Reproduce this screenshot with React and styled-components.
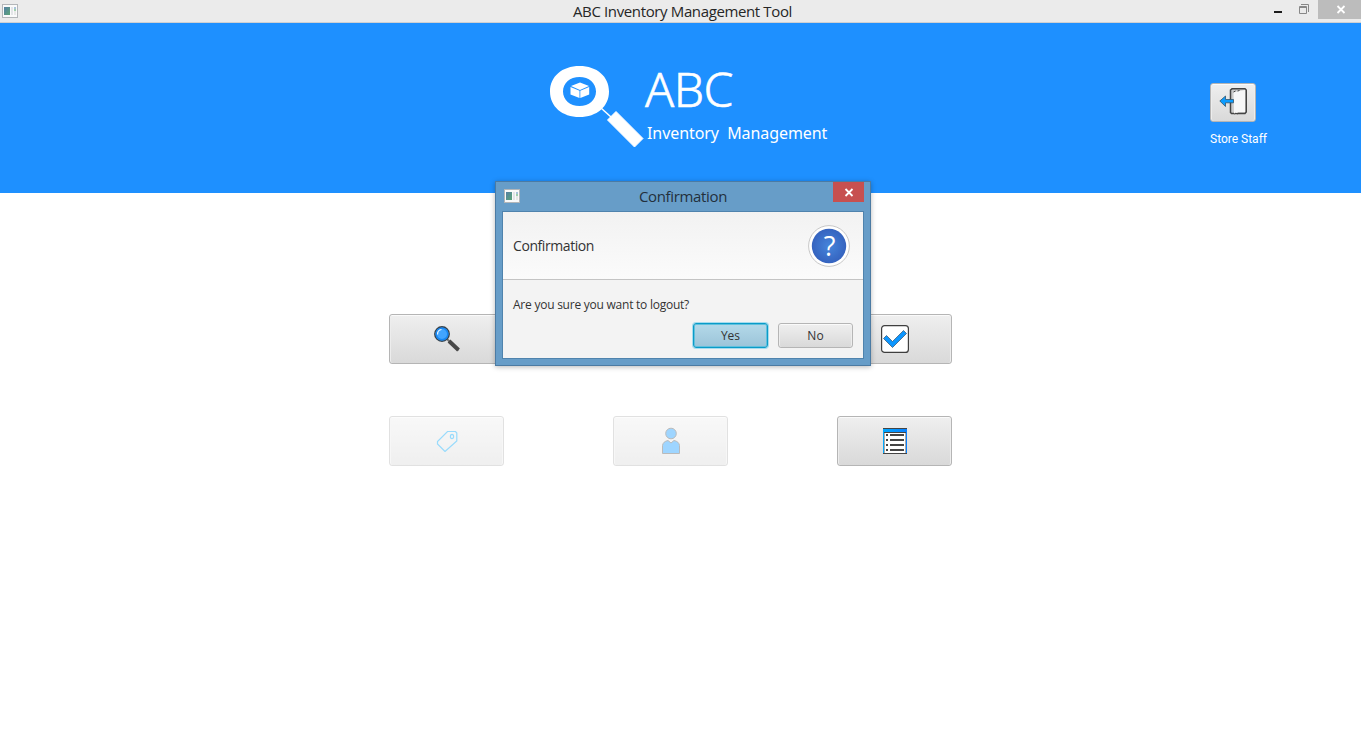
import React from "react";
import styled, { createGlobalStyle } from "styled-components";

const GlobalStyle = createGlobalStyle`
  * { box-sizing: border-box; }
  body {
    margin: 0;
    background: #fff;
    overflow: hidden;
    font-family: "Open Sans", "Noto Sans", sans-serif;
  }
  svg { display: block; }
`;

const Window = styled.div`
  position: relative;
  width: 1361px;
  height: 754px;
  background: #fff;
`;

const TitleBar = styled.div`
  display: grid;
  grid-template-columns: 120px 1fr 120px;
  height: 23px;
  background: #ebebeb;
  border-bottom: 1px solid #cfd0d2;
`;

const TitleIcon = styled.div`
  padding: 4px 0 0 2px;
`;

const WindowTitle = styled.div`
  padding-left: 4px;
  text-align: center;
  font-size: 15px;
  line-height: 23px;
  letter-spacing: -0.37px;
  color: #262626;
  white-space: nowrap;
`;

const Controls = styled.div`
  display: flex;
  justify-content: flex-end;
`;

const Control = styled.div`
  width: ${(p) => p.$width}px;
  height: 19px;
  background: ${(p) => p.$fill || "transparent"};
`;

const Banner = styled.header`
  display: grid;
  grid-template-columns: 550px 1fr 151px;
  height: 170px;
  background: #1e90ff;
  color: #fff;
`;

const Brand = styled.div`
  grid-column: 2;
  display: flex;
  padding-top: 43px;
`;

const BrandText = styled.div`
  display: flex;
  flex-direction: column;
  white-space: pre;
`;

const BrandName = styled.div`
  height: 58px;
  margin: -1px 0 0 1px;
  font-family: "Noto Sans", sans-serif;
  font-weight: 300;
  font-size: 48px;
  line-height: 48px;
  letter-spacing: -0.5px;
  -webkit-text-stroke: 0.6px #fff;
`;

const BrandTag = styled.div`
  margin-left: 3px;
  font-family: "Noto Sans", sans-serif;
  font-size: 16px;
  line-height: 20px;
  letter-spacing: -0.07px;
`;

const Account = styled.div`
  display: flex;
  flex-direction: column;
  padding-top: 60px;
`;

const AccountName = styled.div`
  margin-top: 9px;
  font-family: Roboto, sans-serif;
  font-size: 12px;
  line-height: 16px;
  white-space: nowrap;
`;

const Button = styled.button`
  display: flex;
  align-items: center;
  justify-content: center;
  width: ${(p) => p.$width}px;
  height: ${(p) => p.$height}px;
  padding: 0;
  border: 1px solid #b5b5b5;
  border-radius: 3px;
  background: linear-gradient(#efefef, #d9d9d9);
  box-shadow: inset 0 1px 0 #fafafa, inset 1px 0 0 #ededed, inset -1px 0 0 #ededed;
  opacity: ${(p) => (p.$faded ? 0.4 : 1)};
  font-family: "Open Sans", "Noto Sans", sans-serif;
  font-size: 12px;
  color: #333;
`;

const MenuButton = styled(Button).attrs({ $width: 115, $height: 50 })`
  padding-left: 1px;
`;

const LogoutButton = styled(Button)`
  padding-bottom: 1px;
`;

const PrimaryButton = styled(Button)`
  border-color: #0a9bc8;
  background: linear-gradient(#b4d9e9, #9bc4d9);
  box-shadow: 0 0 0 1px #a5dcee, inset 0 0 0 1px #5fc0dd;
`;

const Menu = styled.main`
  display: grid;
  grid-template-columns: repeat(3, 115px);
  column-gap: 109px;
  row-gap: 52px;
  padding: 121px 0 0 389px;
`;

const Dialog = styled.section`
  position: absolute;
  left: 495px;
  top: 181px;
  width: 376px;
  height: 185px;
  display: flex;
  flex-direction: column;
  padding: 0 6px 6px;
  border: 1px solid #4c7ba3;
  background: #679dc8;
  box-shadow: 0 1px 5px rgba(0, 0, 0, 0.28);
`;

const DialogBar = styled.div`
  display: grid;
  grid-template-columns: 31px 1fr 31px;
  height: 29px;
`;

const DialogIcon = styled.div`
  padding: 7px 0 0 2px;
`;

const DialogTitle = styled.div`
  text-align: center;
  font-size: 15px;
  line-height: 28px;
  letter-spacing: -0.34px;
  color: #23303c;
`;

const DialogClose = styled.div`
  width: 31px;
  height: 20px;
  background: #c75050;
`;

const DialogPane = styled.div`
  flex: 1;
  display: flex;
  flex-direction: column;
  border: 1px solid #4f83ad;
  background: #f3f3f3;
`;

const DialogHeader = styled.div`
  display: flex;
  align-items: center;
  justify-content: space-between;
  height: 68px;
  padding: 0 13px 0 10px;
  border-bottom: 1px solid #c4c4c4;
  background: linear-gradient(#f2f2f2, #fbfbfb);
  font-size: 14px;
  letter-spacing: -0.42px;
  color: #333;
`;

const DialogMessage = styled.div`
  padding: 17px 0 0 10px;
  font-size: 12px;
  line-height: 16px;
  letter-spacing: -0.24px;
  color: #333;
`;

const DialogActions = styled.div`
  display: flex;
  justify-content: flex-end;
  gap: 10px;
  padding: 10px 10px 0 0;
`;

const AppIcon = () => (
  <svg width="16" height="14" viewBox="0 0 16 14" shapeRendering="crispEdges">
    <defs>
      <linearGradient id="pane" x1="0" y1="0" x2="1" y2="1">
        <stop offset="0" stopColor="#557fa5" />
        <stop offset="1" stopColor="#5ba577" />
      </linearGradient>
    </defs>
    <rect x="0.5" y="0.5" width="14.5" height="12.5" fill="#fafafa" stroke="#b3b6b9" />
    <rect x="2" y="3" width="6" height="8" fill="url(#pane)" />
    <rect x="9" y="3" width="2" height="8" fill="#e3e5e8" />
    <rect x="12" y="3" width="2" height="2" fill="#a9c3dc" />
    <rect x="12" y="5" width="2" height="2" fill="#9fd0ad" />
    <rect x="12" y="7" width="2" height="4" fill="#e8e8e8" />
  </svg>
);

const CloseGlyph = ({ width, height, x, y }) => (
  <svg width={width} height={height} viewBox={`0 0 ${width} ${height}`}>
    <path d={`M${x} ${y}l7 7m0 -7l-7 7`} stroke="#fff" strokeWidth="1.8" />
  </svg>
);

const Logo = () => (
  <svg width="94" height="84" viewBox="0 0 94 84">
    <path
      fill="#fff"
      fillRule="evenodd"
      d="M29.5 0C47 0 59 10.500 59 25.500S47 51 29.500 51 0 40.500 0 25.500 12 0 29.500 0ZM29.500 11C20 11 13 17 13 25.500S20 40 29.500 40 46 34 46 25.500 39 11 29.500 11Z"
    />
    <path d="M30 16.500L39 20 30 24 21 20ZM20.500 21L29.500 24.800V32L20.500 28.500ZM39.200 21L30.300 24.800V32L39.200 28.500Z" fill="#fff" />
    <path d="M51 42L61 51" stroke="#fff" strokeWidth="1.500" />
    <path d="M66 45.500L93 72.500 84.500 81 57.500 54Z" fill="#fff" stroke="#fff" strokeWidth="1" strokeLinejoin="round" />
  </svg>
);

const DoorIcon = () => (
  <svg width="28" height="28" viewBox="0 0 28 28">
    <path d="M13 .8H26L27.300 2V24L26 25.500H12.500L11.500 24.500V2Z" fill="#ccc" stroke="#444" strokeWidth="1.500" />
    <path d="M14.500 4.500L17.500 3.500 26 2V24H20.500L15 25.500Z" fill="#f7f7f7" />
    <path d="M14.500 4L16.500 3M18.500 3L20.500 2.500M15.500 26L17 25M18.500 26L20 25" stroke="#444" strokeWidth="1" />
    <path d="M.8 13L6.500 8V11.500H14.500V14.800H6.500V18.500Z" fill="#0c9cff" stroke="#34566b" strokeWidth=".8" />
  </svg>
);

const SearchIcon = () => (
  <svg width="28" height="28" viewBox="0 0 28 28">
    <path d="M14 14L25.500 25.500" stroke="#777" strokeWidth="2" />
    <path d="M16 16L25.500 25" stroke="#484848" strokeWidth="4" />
    <circle cx="9" cy="9" r="7.200" fill="#42a5ff" stroke="#38444e" strokeWidth="1.500" />
    <circle cx="9" cy="9" r="5.800" fill="none" stroke="#1686f2" strokeWidth="1.500" />
    <path d="M4.500 9.500Q4.500 5 8.500 4.500" fill="none" stroke="#e9f6ff" strokeWidth="1.200" />
  </svg>
);

const CheckIcon = () => (
  <svg width="28" height="28" viewBox="0 0 28 28">
    <rect x=".6" y=".6" width="26.800" height="26.800" rx="3" fill="#fff" stroke="#3f3f3f" strokeWidth="1.200" />
    <path d="M2.500 13.500L5.500 10.500 11.500 16.500 22.500 5.500 25.500 8.500 11.500 22.500Z" fill="#0c96ff" stroke="#30506c" strokeWidth=".7" />
  </svg>
);

const TagIcon = () => (
  <svg width="22" height="22" viewBox="0 0 22 22" fill="none" stroke="#00a6f8" strokeWidth="1.200">
    <path d="M11.500 1.500H19.500L20.800 3V11L9 21.500 1.500 14V11.500Z" />
    <ellipse cx="16" cy="6.500" rx="1.600" ry="2.200" />
  </svg>
);

const PersonIcon = () => (
  <svg width="20" height="28" viewBox="0 0 20 28" fill="#0f97ff" stroke="#555" strokeWidth="1">
    <circle cx="10" cy="6.500" r="5.300" />
    <path d="M1.500 26.500V18.500Q2 14.500 7 13.500L10 16 13 13.500Q18 14.500 18.500 18.500V26.500Z" />
  </svg>
);

const ListIcon = () => (
  <svg width="24" height="26" viewBox="0 0 24 26" shapeRendering="crispEdges">
    <defs>
      <linearGradient id="sheet">
        <stop offset="0" stopColor="#00a8ff" />
        <stop offset="1" stopColor="#087fff" />
      </linearGradient>
    </defs>
    <rect width="24" height="26" fill="url(#sheet)" />
    <rect x="1" y="4" width="22" height="21" fill="#aaa" />
    <rect x="2" y="5" width="20" height="20" fill="#fff" />
    <path d="M0 .5H24M1 4.500H23M0 25.500H24" stroke="#444" />
    {[6, 11, 16, 21].map((y) => (
      <path key={y} d={`M3 ${y + 1}h2m2 0h14`} stroke="#444" strokeWidth="2" />
    ))}
  </svg>
);

const QuestionBadge = () => (
  <svg width="42" height="42" viewBox="0 0 42 42">
    <defs>
      <radialGradient id="badge">
        <stop offset="0" stopColor="#4685db" />
        <stop offset="1" stopColor="#3563bf" />
      </radialGradient>
    </defs>
    <circle cx="21" cy="21" r="20.400" fill="#fff" stroke="#c7c7c7" />
    <circle cx="21" cy="21" r="17.200" fill="url(#badge)" />
    <text x="21.300" y="30.500" textAnchor="middle" fontFamily="Open Sans" fontSize="27" fill="#fff">?</text>
  </svg>
);

export default function App() {
  return (
    <Window>
      <GlobalStyle />
      <TitleBar>
        <TitleIcon><AppIcon /></TitleIcon>
        <WindowTitle>ABC Inventory Management Tool</WindowTitle>
        <Controls>
          <Control $width={26}>
            <svg width="26" height="19"><path d="M5 12h8" stroke="#1b1b1b" strokeWidth="2" /></svg>
          </Control>
          <Control $width={23}>
            <svg width="23" height="19" fill="none" stroke="#888">
              <path d="M6 4.500H13.500V12M4.500 6.500H11.500V13.500H4.500ZM4 7.500H12" />
            </svg>
          </Control>
          <Control $width={43} $fill="#bcbcbc">
            <CloseGlyph width={43} height={19} x={19.5} y={6} />
          </Control>
        </Controls>
      </TitleBar>
      <Banner>
        <Brand>
          <Logo />
          <BrandText>
            <BrandName>ABC</BrandName>
            <BrandTag>Inventory  Management</BrandTag>
          </BrandText>
        </Brand>
        <Account>
          <LogoutButton $width={46} $height={39} aria-label="Log out"><DoorIcon /></LogoutButton>
          <AccountName>Store Staff</AccountName>
        </Account>
      </Banner>
      <Menu>
        <MenuButton><SearchIcon /></MenuButton>
        <MenuButton />
        <MenuButton><CheckIcon /></MenuButton>
        <MenuButton $faded><TagIcon /></MenuButton>
        <MenuButton $faded><PersonIcon /></MenuButton>
        <MenuButton><ListIcon /></MenuButton>
      </Menu>
      <Dialog>
        <DialogBar>
          <DialogIcon><AppIcon /></DialogIcon>
          <DialogTitle>Confirmation</DialogTitle>
          <DialogClose><CloseGlyph width={31} height={20} x={12.500} y={7} /></DialogClose>
        </DialogBar>
        <DialogPane>
          <DialogHeader>
            Confirmation
            <QuestionBadge />
          </DialogHeader>
          <DialogMessage>Are you sure you want to logout?</DialogMessage>
          <DialogActions>
            <PrimaryButton $width={75} $height={25}>Yes</PrimaryButton>
            <Button $width={75} $height={25}>No</Button>
          </DialogActions>
        </DialogPane>
      </Dialog>
    </Window>
  );
}
